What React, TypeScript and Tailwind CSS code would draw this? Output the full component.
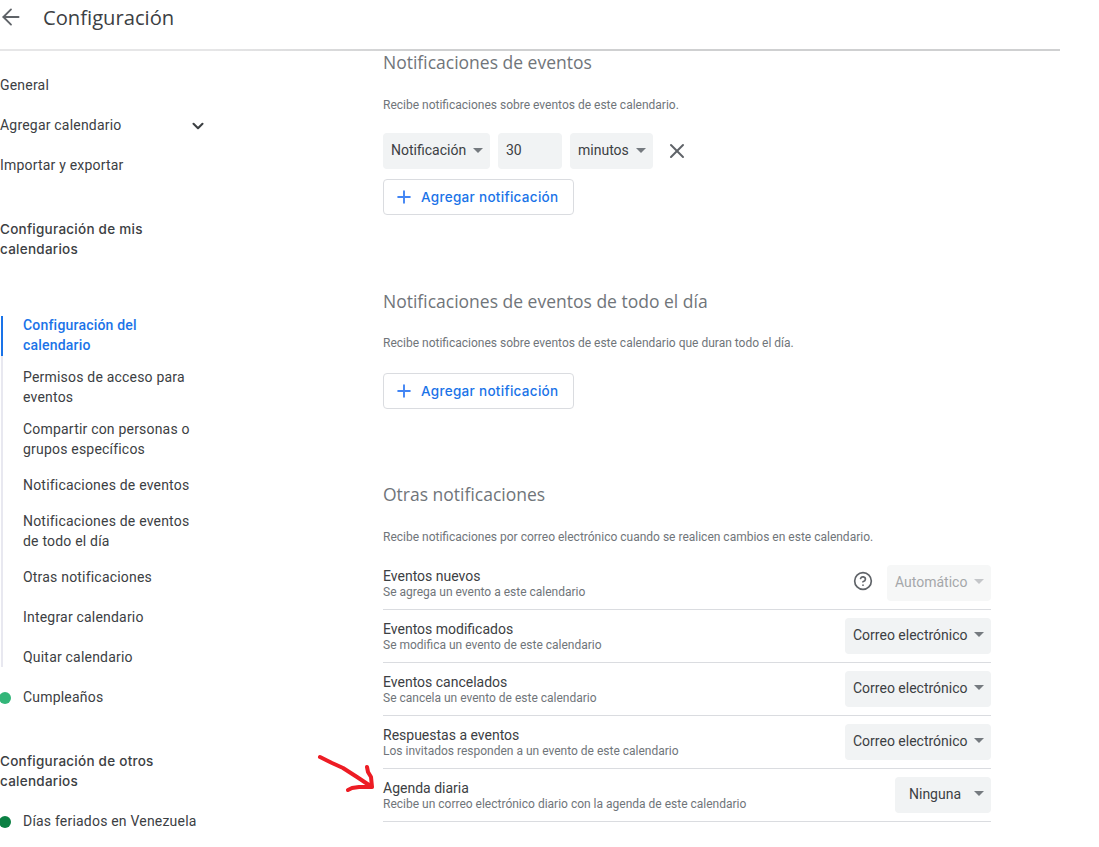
import { ArrowLeft, ChevronDown, Plus, X, CircleHelp } from 'lucide-react';

const font = 'font-["Roboto",sans-serif]';
const heading = 'font-["Open_Sans",sans-serif]';
const medium = 'font-["Inter",sans-serif] font-medium';

function Caret({ muted }: { muted?: boolean }) {
  return (
    <span
      className={`inline-block w-0 h-0 border-x-[5px] border-x-transparent border-t-[5px] ${muted ? 'border-t-[#c4c6c9]' : 'border-t-[#757a7f]'}`}
    />
  );
}

function Select({ label, width, muted, inset }: { label: string; width: string; muted?: boolean; inset?: string }) {
  return (
    <div
      className={`h-9 rounded flex items-center justify-between pr-[7px] pb-[2px] text-sm ${inset ?? 'pl-2'} ${width} ${muted ? 'bg-[#f6f7f7] text-[#a5a7aa]' : 'bg-[#f1f3f4] text-[#3c4043]'}`}
    >
      <span>{label}</span>
      <Caret muted={muted} />
    </div>
  );
}

function AddButton() {
  return (
    <button className={`h-9 w-[191px] rounded border border-[#dadce0] bg-white flex items-center pl-[10px] text-[#1a73e8] text-[13.5px] tracking-[0.3px] ${medium}`}>
      <Plus size={20} strokeWidth={2.3} className="text-[#4285f4] mr-[7px]" />
      Agregar notificación
    </button>
  );
}

function SideItem({ text, active }: { text: string; active?: boolean }) {
  const lines = text.split('\n');
  return (
    <div
      className={`pl-[23px] flex items-center text-sm leading-5 tracking-[0.2px] ${lines.length > 1 ? 'h-[52px]' : 'h-10'} ${active ? 'text-[#1a73e8] font-medium' : 'text-[#3c4043]'}`}
    >
      <div>
        {lines.map((l) => (
          <div key={l}>{l}</div>
        ))}
      </div>
    </div>
  );
}

function CalendarRow({ text, color }: { text: string; color: string }) {
  return (
    <div className="h-10 flex items-center text-sm tracking-[0.2px] text-[#3c4043]">
      <span className={`w-3 h-3 rounded-full -ml-px mr-3 mt-px ${color}`} />
      {text}
    </div>
  );
}

function Row({
  title,
  sub,
  label,
  width,
  muted,
  inset,
}: {
  title: string;
  sub: string;
  label: string;
  width: string;
  muted?: boolean;
  inset?: string;
}) {
  return (
    <div className="h-[53px] border-b border-[#dadce0] flex items-center justify-between pb-px">
      <div className="mt-px">
        <div className="text-sm leading-[17px] text-[#3c4043]">{title}</div>
        <div className="text-xs leading-[14px] text-[#70757a]">{sub}</div>
      </div>
      <div className="flex items-center">
        {muted && <CircleHelp size={20} strokeWidth={2} className="text-[#5f6368] mr-[14px] -mt-[4px]" />}
        <Select label={label} width={width} muted={muted} inset={inset} />
      </div>
    </div>
  );
}

export default function App() {
  return (
    <div className={`relative w-[1099px] h-[847px] overflow-hidden bg-white ${font}`}>
      <header className="w-[1060px] h-[49px] flex items-center pb-[16px]">
        <ArrowLeft size={26} strokeWidth={1.7} className="text-[#5f6368] -ml-[2px]" />
        <h1 className={`ml-[19px] text-[20.2px] leading-6 text-[#3c4043] ${heading}`}>Configuración</h1>
      </header>
      <div className="w-[1060px] h-[2px] bg-linear-to-r from-[#e6e6e7] from-20% to-[#cfd0d1] to-40%" />

      <div className="flex">
        <nav className="w-[383px] shrink-0 pt-[14px]">
          <div className="w-[205px]">
            <div className="h-10 flex items-center text-sm tracking-[0.2px] text-[#3c4043]">General</div>
            <div className="h-10 flex items-center justify-between text-sm tracking-[0.2px] text-[#3c4043]">
              Agregar calendario
              <ChevronDown size={18} strokeWidth={2.8} className="text-[#3c4043] -mr-[1.5px] mt-px" />
            </div>
            <div className="h-10 flex items-center text-sm tracking-[0.2px] text-[#3c4043]">Importar y exportar</div>

            <div className={`mt-[34px] text-[13.5px] leading-5 tracking-[0.25px] text-[#3c4043] ${medium}`}>
              Configuración de mis
              <br />
              calendarios
            </div>

            <div className="relative mt-[50px]">
              <div className="absolute left-[1px] top-[7px] bottom-[10px] w-[2px] bg-[#e8e8f0]" />
              <div className="absolute left-[1px] top-[7px] h-10 w-[2px] bg-[#1a73e8]" />
              <SideItem text={'Configuración del\ncalendario'} active />
              <SideItem text={'Permisos de acceso para\neventos'} />
              <SideItem text={'Compartir con personas o\ngrupos específicos'} />
              <SideItem text="Notificaciones de eventos" />
              <SideItem text={'Notificaciones de eventos\nde todo el día'} />
              <SideItem text="Otras notificaciones" />
              <SideItem text="Integrar calendario" />
              <SideItem text="Quitar calendario" />
            </div>
            <CalendarRow text="Cumpleaños" color="bg-[#33b679]" />

            <div className={`mt-[34px] text-[13.5px] leading-5 tracking-[0.25px] text-[#3c4043] ${medium}`}>
              Configuración de otros
              <br />
              calendarios
            </div>
            <div className="mt-[10px]">
              <CalendarRow text="Días feriados en Venezuela" color="bg-[#0b8043]" />
            </div>
          </div>
        </nav>

        <main className="w-[608px] -mt-[1px]">
          <h2 className={`text-[17.5px] leading-6 text-[#70757a] ${heading}`}>Notificaciones de eventos</h2>
          <p className="mt-[23px] text-xs leading-4 text-[#70757a]">
            Recibe notificaciones sobre eventos de este calendario.
          </p>
          <div className="mt-[20px] flex items-center gap-2">
            <Select label="Notificación" width="w-[107px]" />
            <div className="h-9 w-16 rounded bg-[#f1f3f4] flex items-center pl-2 pb-[2px] text-sm text-[#3c4043]">30</div>
            <Select label="minutos" width="w-[83px]" />
            <X size={24} strokeWidth={2} className="text-[#5f6368] ml-[4px]" />
          </div>
          <div className="mt-[10px]">
            <AddButton />
          </div>

          <h2 className={`mt-[74px] text-[17.5px] leading-6 text-[#70757a] ${heading}`}>Notificaciones de eventos de todo el día</h2>
          <p className="mt-[22px] text-xs leading-4 text-[#70757a]">
            Recibe notificaciones sobre eventos de este calendario que duran todo el día.
          </p>
          <div className="mt-[22px]">
            <AddButton />
          </div>

          <h2 className={`mt-[73px] text-[17.5px] leading-6 text-[#70757a] ${heading}`}>Otras notificaciones</h2>
          <p className="mt-[23px] text-xs leading-4 text-[#70757a]">
            Recibe notificaciones por correo electrónico cuando se realicen cambios en este calendario.
          </p>
          <div className="mt-[12px]">
            <Row title="Eventos nuevos" sub="Se agrega un evento a este calendario" label="Automático" width="w-[104px]" muted />
            <Row title="Eventos modificados" sub="Se modifica un evento de este calendario" label="Correo electrónico" width="w-[146px]" />
            <Row title="Eventos cancelados" sub="Se cancela un evento de este calendario" label="Correo electrónico" width="w-[146px]" />
            <Row title="Respuestas a eventos" sub="Los invitados responden a un evento de este calendario" label="Correo electrónico" width="w-[146px]" />
            <Row title="Agenda diaria" sub="Recibe un correo electrónico diario con la agenda de este calendario" label="Ninguna" width="w-[96px]" inset="pl-[14px]" />
          </div>
        </main>
      </div>

      {/* hand drawn annotation */}
      <svg className="absolute left-[315px] top-[750px]" width="65" height="50" viewBox="0 0 65 50" fill="none">
        <path
          d="M5 7 L17 13 L28 18 L42 27 L57 37 M52 17 L53 22 L56 27 L57 37 L44 37 L37 38 L33 40"
          stroke="#ed1c24"
          strokeWidth="4"
          strokeLinecap="round"
          strokeLinejoin="round"
        />
      </svg>
    </div>
  );
}
